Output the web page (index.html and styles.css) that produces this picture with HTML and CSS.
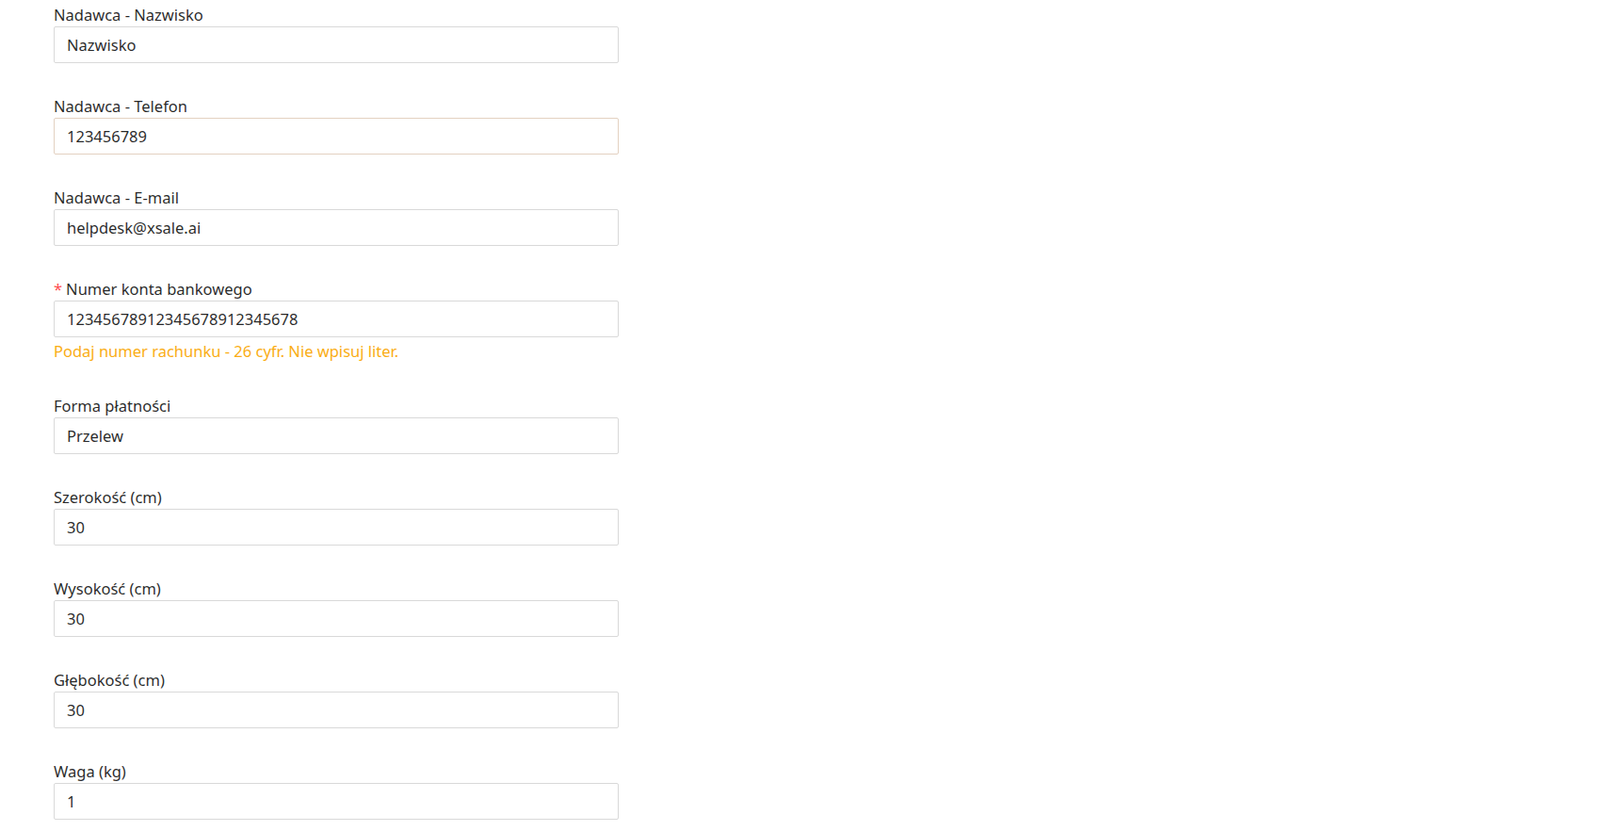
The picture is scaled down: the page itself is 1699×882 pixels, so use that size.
FILE: index.html
```html
<!DOCTYPE html>
<html>
<head>
    <meta charset="utf-8">
    <link rel="stylesheet" href="styles.css">
</head>
<body>
    <form class="shipment-form">
        <div class="form-item">
            <label for="sender-name">Nadawca - Nazwisko</label>
            <input type="text" id="sender-name" value="Nazwisko">
        </div>
        <div class="form-item">
            <label for="sender-phone">Nadawca - Telefon</label>
            <input type="text" id="sender-phone" class="hovered" value="123456789">
        </div>
        <div class="form-item">
            <label for="sender-email">Nadawca - E-mail</label>
            <input type="text" id="sender-email" value="helpdesk@xsale.ai">
        </div>
        <div class="form-item">
            <label for="account" class="required">Numer konta bankowego</label>
            <input type="text" id="account" value="12345678912345678912345678">
            <div class="form-help warning">Podaj numer rachunku - 26 cyfr. Nie wpisuj liter.</div>
        </div>
        <div class="form-item">
            <label for="payment">Forma płatności</label>
            <input type="text" id="payment" value="Przelew">
        </div>
        <div class="form-item">
            <label for="width">Szerokość (cm)</label>
            <input type="text" id="width" value="30">
        </div>
        <div class="form-item">
            <label for="height">Wysokość (cm)</label>
            <input type="text" id="height" value="30">
        </div>
        <div class="form-item">
            <label for="depth">Głębokość (cm)</label>
            <input type="text" id="depth" value="30">
        </div>
        <div class="form-item">
            <label for="weight">Waga (kg)</label>
            <input type="text" id="weight" value="1">
        </div>
    </form>
</body>
</html>
```

FILE: styles.css
```css
body {
    margin: 0;
    padding: 4px 0 0 57px;
    background: #fff;
    font-family: "Segoe UI", "Noto Sans", sans-serif;
    font-size: 16.5px;
    color: rgba(0, 0, 0, 0.85);
}
.shipment-form {
    width: 600px;
}
.form-item {
    margin-bottom: 34.5px;
}
.form-item label {
    display: block;
    line-height: 24px;
}
.form-item label.required::before {
    content: "*";
    color: #ff4d4f;
    margin-right: 4px;
}
.form-item input {
    display: block;
    box-sizing: border-box;
    width: 100%;
    height: 38.5px;
    padding: 1px 13px 0;
    border: 1px solid #d9d9d9;
    border-radius: 2px;
    font: inherit;
    color: rgba(0, 0, 0, 0.85);
    background: #fff;
    outline: none;
}
.form-item input.hovered {
    border-color: #e3d1c1;
}
.form-help {
    line-height: 24px;
    padding-top: 3px;
}
.warning {
    color: #faad14;
}
```
